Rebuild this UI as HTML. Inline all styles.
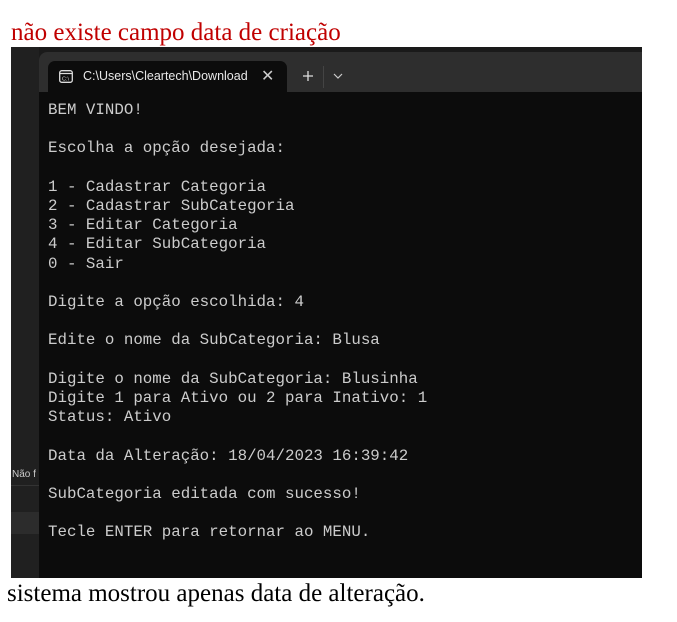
<!DOCTYPE html>
<html><head><meta charset="utf-8"><style>
html,body{margin:0;padding:0;background:#fff;width:677px;height:622px;overflow:hidden;position:relative}
.t1{position:absolute;left:11px;top:19px;font:25px/28px "Liberation Serif",serif;color:#c00000;white-space:nowrap}
.t2{position:absolute;left:7px;top:580px;font:25px/28px "Liberation Serif",serif;color:#000;white-space:nowrap}
.shot{position:absolute;left:11px;top:47px;width:631px;height:531px;background:#1a1a1a;overflow:hidden}
.strip{position:absolute;left:0;top:0;width:28px;height:531px;background:#202020}
.win{position:absolute;left:28px;top:5px;right:0;bottom:0;background:#0c0c0c;border-top-left-radius:8px;overflow:hidden}
.bar{position:absolute;left:0;top:0;right:0;height:40px;background:#2e2e2e}
.tab{position:absolute;left:9px;top:9px;width:239px;height:32px;background:#0c0c0c;border-radius:7px 7px 0 0;font:12.5px "Liberation Sans",sans-serif;color:#e8e8e8}
.term{position:absolute;left:9px;top:49px;font:15.8px/19.2px "Liberation Mono","DejaVu Sans Mono",monospace;color:#cccccc;white-space:pre;margin:0}
</style></head><body>
<div class="t1">não existe campo data de criação</div>
<div class="shot">
 <div class="strip">
  <div style="position:absolute;top:418px;left:0;width:28px;height:20px;font:10px 'Liberation Sans',sans-serif;color:#ccc;line-height:20px;padding-left:1px">Não f</div>
  <div style="position:absolute;top:438px;left:0;width:28px;height:1px;background:#333"></div>
  <div style="position:absolute;top:465px;left:0;width:28px;height:22px;background:#2c2c2c"></div>
 </div>
 <div class="win">
  <div class="bar"></div>
  <div class="tab">
   <svg style="position:absolute;left:11px;top:9px" width="14" height="13" viewBox="0 0 14 13"><rect x="0.7" y="0.7" width="12.6" height="11.6" rx="2" fill="none" stroke="#ddd" stroke-width="1.3"/><line x1="1" y1="3.5" x2="13" y2="3.5" stroke="#ddd" stroke-width="1.2"/><text x="3" y="10.5" font-size="5.5" fill="#ddd" font-family="Liberation Sans">C:\</text></svg>
   <span style="position:absolute;left:35px;top:8px">C:\Users\Cleartech\Download</span>
   <span style="position:absolute;left:213px;top:5px;font-size:16px;color:#ccc">✕</span>
  </div>
  <svg style="position:absolute;left:263px;top:18px" width="12" height="12"><path d="M6 1V11M1 6H11" stroke="#ddd" stroke-width="1.3"/></svg>
  <div style="position:absolute;left:284px;top:14px;width:1px;height:22px;background:#444"></div>
  <svg style="position:absolute;left:294px;top:21px" width="10" height="6"><path d="M1 1L5 5L9 1" stroke="#ccc" stroke-width="1.2" fill="none"/></svg>
  <pre class="term">BEM VINDO!

Escolha a opção desejada:

1 - Cadastrar Categoria
2 - Cadastrar SubCategoria
3 - Editar Categoria
4 - Editar SubCategoria
0 - Sair

Digite a opção escolhida: 4

Edite o nome da SubCategoria: Blusa

Digite o nome da SubCategoria: Blusinha
Digite 1 para Ativo ou 2 para Inativo: 1
Status: Ativo

Data da Alteração: 18/04/2023 16:39:42

SubCategoria editada com sucesso!

Tecle ENTER para retornar ao MENU.</pre>
 </div>
</div>
<div class="t2">sistema mostrou apenas data de alteração.</div>
</body></html>
